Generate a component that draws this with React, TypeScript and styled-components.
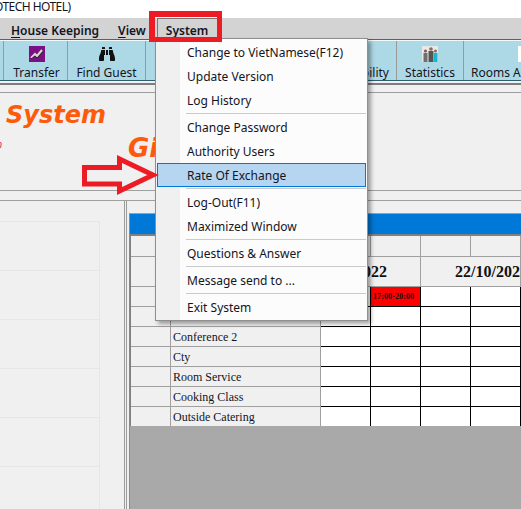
import { Fragment } from 'react';
import styled, { createGlobalStyle } from 'styled-components';
import { FaBinoculars } from 'react-icons/fa';

const GlobalStyle = createGlobalStyle`
  html, body {
    margin: 0;
    padding: 0;
    background: #f0f0f0;
  }
  * {
    box-sizing: border-box;
  }
`;

const uiFont = `'Noto Sans', 'Open Sans', sans-serif`;
const gridFont = `'Liberation Serif', serif`;

const Page = styled.div`
  position: relative;
  width: 521px;
  height: 509px;
  overflow: hidden;
  display: flex;
  flex-direction: column;
  font-family: ${uiFont};
  font-size: 12px;
  color: #14141e;
`;

const TitleBar = styled.div`
  flex: none;
  height: 18px;
  background: #fff;
  line-height: 13px;
  letter-spacing: -0.55px;
  white-space: nowrap;
  text-indent: -6px;
`;

const MenuBar = styled.div`
  flex: none;
  height: 22px;
  background: #d3d3d3;
  border-bottom: 1px solid #5f5f5f;
  display: flex;
  gap: 1px;
  padding-left: 2px;
`;

const MenuBarItem = styled.div<{ $active?: boolean }>`
  padding: ${(p) => (p.$active ? '0 10px 0 8px' : '0 8px')};
  margin-left: ${(p) => (p.$active ? 1 : 0)}px;
  line-height: 23px;
  font-weight: 600;
  border: 1px solid ${(p) => (p.$active ? '#777' : 'transparent')};
  border-bottom: 0;

  u {
    text-underline-offset: 2px;
  }
`;

const Toolbar = styled.div`
  flex: none;
  height: 41px;
  background: #add8e6;
  border-top: 1px solid #f2f8fa;
  border-bottom: 1px solid #2f5f70;
  display: flex;
  padding-left: 3px;
  overflow: hidden;
`;

const ToolButton = styled.div<{ $width: number; $align?: string; $nudge?: boolean }>`
  flex: none;
  width: ${(p) => p.$width}px;
  border-left: 1px solid #9a9a9a;
  display: flex;
  flex-direction: column;
  align-items: ${(p) => p.$align ?? 'center'};
  padding: 5px 7px 0 ${(p) => (p.$nudge ? 9 : 7)}px;
  white-space: nowrap;
  line-height: 16px;
`;

const ToolIcon = styled.svg`
  display: block;
  flex: none;
  width: 16px;
  height: 16px;
  margin-bottom: 3px;
`;

const RoomsIcon = styled(ToolIcon)`
  margin-left: 47px;
`;

const BinocularIcon = styled(FaBinoculars)`
  display: block;
  flex: none;
  width: 16px;
  height: 16px;
  margin-bottom: 3px;
  color: #111;
`;

const Strip = styled.div`
  flex: none;
  height: 10px;
  margin-top: 2px;
  background: #f0f0f0;
  border-top: 2px solid #7d7d7d;
  border-bottom: 1px solid #9d9d9d;
`;

const Banner = styled.div`
  flex: none;
  height: 98px;
  background: #f0f0f0;
  border-bottom: 1px solid #a0a0a0;
  display: flex;
  overflow: hidden;
`;

const BannerLeft = styled.div`
  flex: none;
  width: 106px;
  padding-top: 6px;
  display: flex;
  flex-direction: column;
  align-items: flex-end;
  overflow: hidden;
`;

const BannerTitle = styled.div`
  font-family: 'DejaVu Sans', sans-serif;
  font-size: 24px;
  font-weight: 700;
  font-style: italic;
  line-height: 32px;
  color: #ff5a0a;
  white-space: nowrap;
`;

const BannerSub = styled.div`
  width: 106px;
  padding-top: 8px;
  text-indent: -4px;
  font-family: 'DejaVu Sans', sans-serif;
  font-size: 10px;
  font-style: italic;
  color: #f01a50;
  line-height: 12px;
`;

const BannerGi = styled(BannerTitle)`
  font-size: 26px;
  margin: 39px 0 0 22px;
`;

const Divider = styled.div`
  flex: none;
  height: 10px;
  background: #f0f0f0;
  border-bottom: 1px solid #a0a0a0;
`;

const Main = styled.div`
  flex: 1;
  min-height: 0;
  display: flex;
  background: #f0f0f0;
`;

const LeftPanel = styled.div`
  flex: none;
  width: 125px;
  border-right: 1px solid #9a9a9a;
  padding-top: 20px;
  overflow: hidden;
`;

const LeftRow = styled.div`
  width: 100px;
  height: 49px;
  border-right: 1px solid #e6e6e6;
  border-top: 1px solid #e6e6e6;
`;

const RightPanel = styled.div`
  flex: 1;
  min-width: 0;
  margin-left: 1px;
  border-left: 1px solid #9a9a9a;
  padding: 12px 0 0 2px;
  display: flex;
`;

const Schedule = styled.div`
  flex: 1;
  min-width: 0;
  display: flex;
  flex-direction: column;
  border-left: 1px solid #8a8a8a;
  border-top: 1px solid #a0a0a0;
`;

const BlueHeader = styled.div`
  flex: none;
  height: 20px;
  background: #0078d7;
`;

const GridArea = styled.div`
  flex: 1;
  min-height: 0;
  background: #a9a9a9;
  border-top: 2px solid #808080;
`;

const Grid = styled.div`
  display: grid;
  grid-template-columns: 40px 150px repeat(4, 50px);
  grid-template-rows: 21px 30px repeat(7, 20px);
  height: 190px;
  overflow: hidden;
  border-left: 1px solid #808080;
`;

const HeadCell = styled.div`
  background: #f0f0f0;
  border-right: 1px solid #a0a0a0;
  border-bottom: 1px solid #a0a0a0;
`;

const DateCell = styled(HeadCell)<{ $span: number; $pad: number; $end?: boolean }>`
  grid-column: span ${(p) => p.$span};
  font-family: ${gridFont};
  font-size: 16px;
  font-weight: 700;
  line-height: 29px;
  color: #111;
  white-space: nowrap;
  overflow: hidden;
  text-align: ${(p) => (p.$end ? 'right' : 'left')};
  padding: ${(p) => (p.$end ? `0 ${p.$pad}px 0 0` : `0 0 0 ${p.$pad}px`)};
`;

const LabelCell = styled(HeadCell)`
  font-family: ${gridFont};
  font-size: 12px;
  line-height: 21px;
  padding-left: 2px;
  color: #14141e;
  white-space: nowrap;
`;

const SlotCell = styled.div<{ $booked?: boolean }>`
  background: ${(p) => (p.$booked ? '#ff0000' : '#fff')};
  border-right: 1px solid #000;
  border-bottom: 1px solid #000;
  font-family: ${gridFont};
  font-size: 8px;
  font-weight: 700;
  letter-spacing: 0.1px;
  line-height: 19px;
  padding-left: 2px;
  color: #111;
  white-space: nowrap;
`;

const Dropdown = styled.div`
  position: absolute;
  left: 155px;
  top: 38px;
  width: 213px;
  height: 283px;
  background: linear-gradient(#f0f0f0, #f0f0f0) no-repeat 0 0 / 24px 100%, #fcfcfc;
  border: 1px solid #8f8f8f;
  box-shadow: 3px 3px 4px rgba(0, 0, 0, 0.35);
  padding: 1px;
`;

const DropdownItem = styled.div<{ $selected?: boolean }>`
  height: 24px;
  line-height: 24px;
  padding-left: 29px;
  white-space: nowrap;
  border: 1px solid ${(p) => (p.$selected ? '#0078d7' : 'transparent')};
  background: ${(p) => (p.$selected ? '#b5d5f0' : 'transparent')};
`;

const DropdownSep = styled.div`
  height: 3px;
  margin-left: 29px;
  display: flex;
  align-items: center;

  &::after {
    content: '';
    flex: 1;
    height: 1px;
    background: #cbcbcb;
  }
`;

const RedFrame = styled.div`
  position: absolute;
  left: 149px;
  top: 11px;
  width: 73px;
  height: 31px;
  border: 6px solid #ed1c24;
  border-bottom-width: 5px;
  border-right-width: 5px;
  pointer-events: none;
`;

const RedArrow = styled.svg`
  position: absolute;
  left: 78px;
  top: 150px;
  width: 82px;
  height: 50px;
`;

const menuGroups = [
  ['Change to VietNamese(F12)', 'Update Version', 'Log History'],
  ['Change Password', 'Authority Users', 'Rate Of Exchange'],
  ['Log-Out(F11)', 'Maximized Window'],
  ['Questions & Answer'],
  ['Message send to ...'],
  ['Exit System'],
];

const rooms = ['', '', 'Conference 2', 'Cty', 'Room Service', 'Cooking Class', 'Outside Catering'];

export default function App() {
  return (
    <Page>
      <GlobalStyle />
      <TitleBar>OTECH HOTEL)</TitleBar>
      <MenuBar>
        <MenuBarItem><u>H</u>ouse Keeping</MenuBarItem>
        <MenuBarItem><u>V</u>iew</MenuBarItem>
        <MenuBarItem $active><u>S</u>ystem</MenuBarItem>
      </MenuBar>
      <Toolbar>
        <ToolButton $width={64} $nudge>
          <ToolIcon viewBox="0 0 16 16">
            <rect width="16" height="16" fill="#7d0f85" />
            <path d="M2 12 L6 8 L8 10 L13 4" stroke="#d8d8d8" strokeWidth="2" fill="none" />
            <path d="M2 13 L6 10 L8 12 L14 6" stroke="#2a2a2a" strokeWidth="1" fill="none" />
          </ToolIcon>
          Transfer
        </ToolButton>
        <ToolButton $width={78}>
          <BinocularIcon />
          Find Guest
        </ToolButton>
        <ToolButton $width={251} $align="flex-end">
          <ToolIcon as="div" />
          Availability
        </ToolButton>
        <ToolButton $width={67}>
          <ToolIcon viewBox="0 0 16 16">
            <rect width="16" height="16" fill="#e8e8e8" />
            <circle cx="3.5" cy="5" r="1.6" fill="#8a5a4a" />
            <rect x="1.5" y="7" width="4" height="9" fill="#6f6f6f" />
            <circle cx="9" cy="3" r="1.8" fill="#8a6a5a" />
            <rect x="6.5" y="5" width="5" height="11" fill="#555" />
            <circle cx="13.5" cy="5" r="1.5" fill="#8a6a5a" />
            <rect x="12" y="7" width="3.5" height="9" fill="#19b6d2" />
          </ToolIcon>
          Statistics
        </ToolButton>
        <ToolButton $width={110} $align="flex-start">
          <RoomsIcon viewBox="0 0 16 16">
            <rect width="16" height="16" fill="#fff" />
          </RoomsIcon>
          Rooms Allotment
        </ToolButton>
      </Toolbar>
      <Strip />
      <Banner>
        <BannerLeft>
          <BannerTitle>r System</BannerTitle>
          <BannerSub>n</BannerSub>
        </BannerLeft>
        <BannerGi>Gi</BannerGi>
      </Banner>
      <Divider />
      <Main>
        <LeftPanel>
          {Array.from({ length: 7 }, (_, i) => (
            <LeftRow key={i} />
          ))}
        </LeftPanel>
        <RightPanel>
          <Schedule>
            <BlueHeader />
            <GridArea>
              <Grid>
                {Array.from({ length: 6 }, (_, i) => (
                  <HeadCell key={i} />
                ))}
                <DateCell $span={4} $pad={33} $end>21/10/2022</DateCell>
                <DateCell $span={2} $pad={34}>22/10/2022</DateCell>
                {rooms.map((room, r) => (
                  <Fragment key={r}>
                    <HeadCell />
                    <LabelCell>{room}</LabelCell>
                    {[0, 1, 2, 3].map((c) => (
                      <SlotCell key={c} $booked={r === 0 && c === 1}>
                        {r === 0 && c === 1 ? '17:00-20:00' : ''}
                      </SlotCell>
                    ))}
                  </Fragment>
                ))}
              </Grid>
            </GridArea>
          </Schedule>
        </RightPanel>
      </Main>
      <Dropdown>
        {menuGroups.map((group, g) => (
          <div key={g}>
            {g > 0 && <DropdownSep />}
            {group.map((label) => (
              <DropdownItem key={label} $selected={label === 'Rate Of Exchange'}>
                {label}
              </DropdownItem>
            ))}
          </div>
        ))}
      </Dropdown>
      <RedFrame />
      <RedArrow viewBox="78 150 82 50">
        <path
          d="M84.5 167.5 H119.5 V159 L153 175 L119.5 191 V184 H84.5 Z"
          fill="none"
          stroke="#ed1c24"
          strokeWidth="5"
        />
      </RedArrow>
    </Page>
  );
}
